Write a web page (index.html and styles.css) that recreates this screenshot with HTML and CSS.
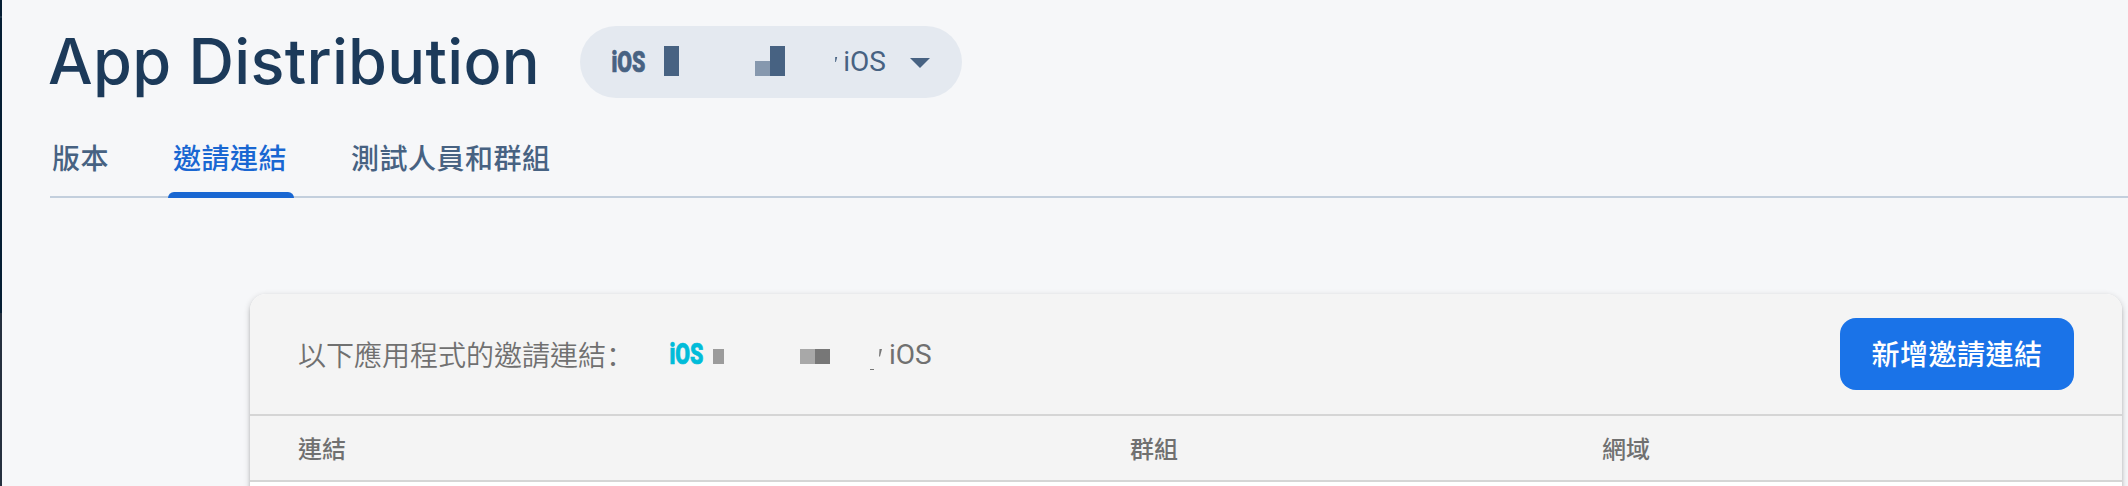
FILE: index.html
```html
<!DOCTYPE html>
<html lang="zh-Hant">
<head>
<meta charset="utf-8">
<title>App Distribution</title>
<link rel="stylesheet" href="styles.css">
</head>
<body>
<div class="app">
  <aside class="sidebar-edge"></aside>
  <main class="content">
    <header class="page-header">
      <h1 class="page-title">App Distribution</h1>
      <button class="app-picker">
        <svg class="ios-logo" width="34" height="22" viewBox="0 0 34 22"><text x="-.5" y="21" textLength="34" lengthAdjust="spacingAndGlyphs">iOS</text></svg>
        <svg class="picker-mask" width="122" height="30" viewBox="0 0 122 30"><path d="M0 0h15v30H0zM106 0h15v30h-15z"/><path opacity=".6" d="M91 15h15v15H91z"/></svg>
        <svg class="picker-tick" width="3" height="8" viewBox="0 0 3 8"><path d="M.2 1H2.2L.9 6H.2z"/></svg>
        <span class="picker-name">iOS</span>
        <svg class="picker-arrow" width="20" height="10" viewBox="0 0 20 10"><path d="M0 0h20L10 10z"/></svg>
      </button>
    </header>
    <nav class="tabs">
      <a class="tab">版本</a>
      <a class="tab tab-active">邀請連結</a>
      <a class="tab">測試人員和群組</a>
    </nav>
    <section class="card">
      <div class="card-header">
        <span class="card-label">以下應用程式的邀請連結<span class="colon" lang="zh-Hans">：</span></span>
        <svg class="ios-logo ios-logo-cyan" width="34" height="22" viewBox="0 0 34 22"><text x="-.5" y="21" textLength="34" lengthAdjust="spacingAndGlyphs">iOS</text></svg>
        <svg class="card-mask" width="170" height="22" viewBox="0 0 170 22"><path fill="#9b9b9b" d="M0 0h11v15H0z"/><path fill="#a8a8a8" d="M87 0h15v15H87z"/><path fill="#777" d="M102 0h15v15h-15zM166.500 0h2.500L167 7.500h-1zM157 20h4v1h-4z"/></svg>
        <span class="card-app">iOS</span>
        <button class="create-button">新增邀請連結</button>
      </div>
      <div class="table-head">
        <span>連結</span><span>群組</span><span>網域</span>
      </div>
    </section>
  </main>
</div>
</body>
</html>
```
FILE: styles.css
```css
* { box-sizing: border-box; }
body {
  margin: 0;
  background: #f6f7f9;
  font-family: Roboto, "Noto Sans CJK TC", sans-serif;
}
button { border: 0; font-family: inherit; }
.app { display: flex; height: 486px; overflow: hidden; }
.sidebar-edge {
  width: 2px;
  flex: none;
  background: linear-gradient(#051e34 0 16px, #1d3549 16px 18px, #051e34 18px 313px, #25303f 313px);
}
.content { flex: 1; min-width: 0; }
.page-header {
  display: flex;
  align-items: flex-start;
  height: 126px;
  padding: 26px 0 0 48px;
}
.page-title {
  width: 530px;
  margin: -4px 2px 0 -2px;
  font: 500 63px/78px Inter, sans-serif;
  color: #1c3a5a;
  letter-spacing: 0.3px;
  white-space: nowrap;
}
.app-picker {
  display: flex;
  align-items: center;
  flex: none;
  width: 382px;
  height: 72px;
  padding: 0 0 0 32px;
  border-radius: 36px;
  background: #e4e9f0;
  color: #476282;
  fill: #476282;
}
.ios-logo { flex: none; font: 900 29px Roboto, sans-serif; overflow: visible; stroke-width: 0.7px; stroke: #476282; }
.picker-mask { margin: -2px 0 0 18px; }
.picker-tick { margin: -5px 0 0 49px; }
.picker-name { margin-left: 5px; width: 43px; font-size: 28px; line-height: 72px; }
.picker-arrow { margin: 1px 0 0 24px; }
.tabs {
  display: flex;
  gap: 51px;
  height: 72px;
  margin-left: 48px;
  border-bottom: 2px solid #c3cfdd;
}
.tab {
  height: 72px;
  padding: 1px 6px 0;
  font-size: 28px;
  font-weight: 500;
  line-height: 65px;
  letter-spacing: 0.5px;
  color: #476282;
  white-space: nowrap;
}
.tab:first-child { width: 67px; padding: 1px 2px 0; }
.tab-active {
  width: 126px;
  padding: 1px 5px 0;
  color: #1967d2;
}
.tab-active::after {
  content: "";
  display: block;
  width: 126px;
  height: 6px;
  margin-left: -5px;
  border-radius: 6px 6px 0 0;
  background: #1967d2;
}
.card {
  width: 1872px;
  height: 250px;
  margin: 96px 0 0 248px;
  border-radius: 16px;
  overflow: hidden;
  background: #fff;
  box-shadow: 0 2px 6px rgba(0,0,0,.22), 0 3px 3px rgba(0,0,0,.12);
}
.card-header {
  display: flex;
  align-items: center;
  height: 122px;
  padding: 0 48px;
  border-bottom: 2px solid #d5d5d5;
  background: #f4f4f4;
  color: #707070;
  font-size: 28px;
}
.card-label { width: 372px; white-space: nowrap; font-weight: 350; }
.colon { font-family: "Noto Sans CJK SC", sans-serif; }
.ios-logo-cyan { fill: #00bcd9; stroke: #00bcd9; }
.card-mask { margin: 12px 0 0 9px; }
.card-app { margin-left: 6px; }
.create-button {
  width: 234px;
  height: 72px;
  margin-left: auto;
  padding: 0 0 2px;
  border-radius: 16px;
  background: #1a73e8;
  color: #fff;
  font-size: 28px;
  font-weight: 500;
  letter-spacing: 0.5px;
}
.table-head {
  display: grid;
  grid-template-columns: 832px 472px 1fr;
  height: 66px;
  padding-left: 48px;
  border-bottom: 2px solid #d5d5d5;
  background: #f4f4f4;
  color: #707070;
  font-size: 24px;
  font-weight: 500;
  line-height: 68px;
}
```
